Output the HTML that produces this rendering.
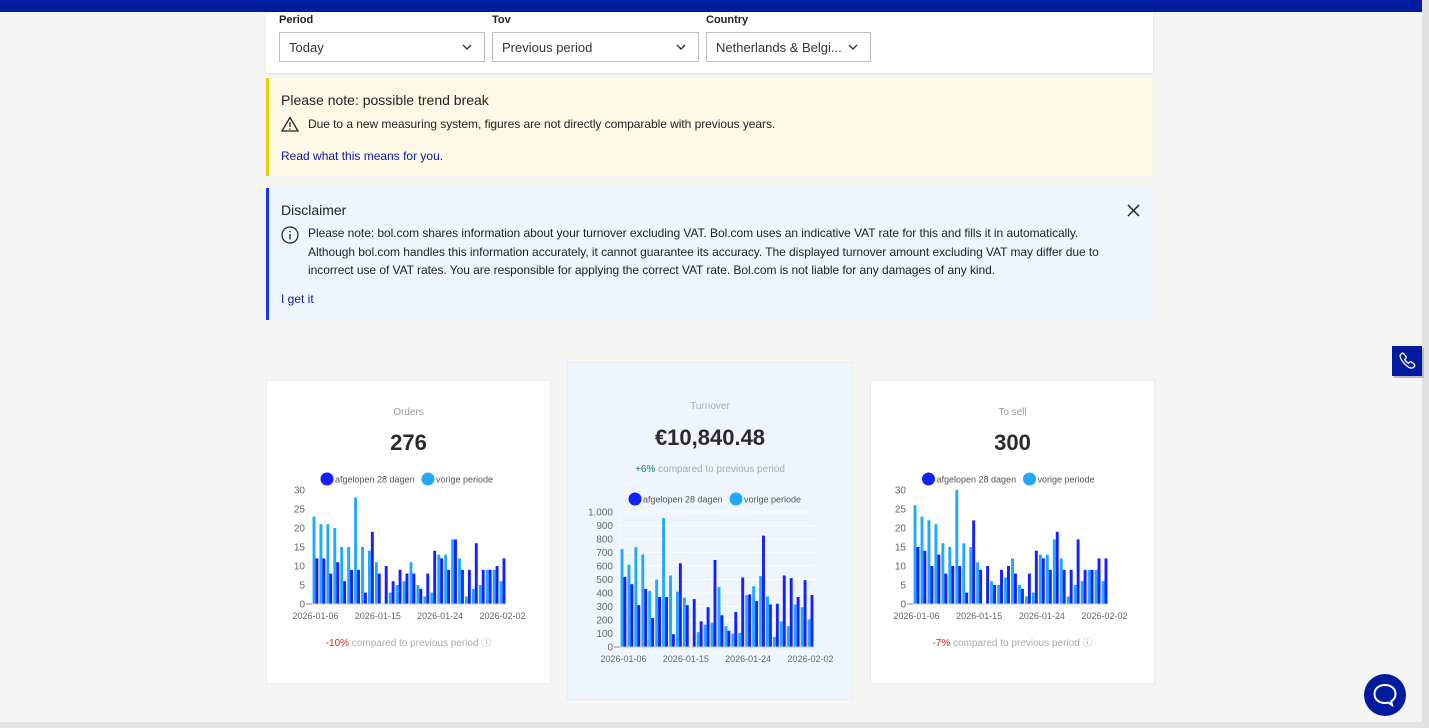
<!DOCTYPE html>
<html><head><meta charset="utf-8"><style>
*{box-sizing:border-box;margin:0;padding:0}
body{width:1429px;height:728px;overflow:hidden;background:#f5f5f4;font-family:"Liberation Sans",Arial,sans-serif;color:#222;position:relative}
.top{position:absolute;left:0;top:0;width:1422px;height:12px;background:#001ba0}
.sb{position:absolute;right:0;top:0;width:7px;height:728px;background:#e2e2e2}
.bot{position:absolute;left:0;top:722px;width:1422px;height:6px;background:#e2e2e2}
.panel{position:absolute;left:266px;top:12px;width:887px;height:61px;background:#fff;box-shadow:0 1px 2px rgba(0,0,0,.1)}
.lbl{position:absolute;top:2px;font-size:11px;font-weight:bold;color:#222}
.sel{position:absolute;top:20px;height:30px;border:1px solid #bdbdbd;background:#fff;font-size:13px;color:#333;padding:7px 0 0 9px}
.sel svg{position:absolute;right:12px;top:11px}
.note{position:absolute;left:266px;width:887px;font-size:12px;color:#222}
.note h3{font-weight:normal;font-size:14px;position:absolute;left:15px;top:14px}
.note .t{position:absolute;left:42px;white-space:nowrap;line-height:18.5px;letter-spacing:-0.05px}
.note a{position:absolute;left:15px;color:#0b1a9c;text-decoration:none}
.card{position:absolute;background:#fff;border:1px solid #ececec}
.card .ti{position:absolute;width:100%;text-align:center;font-size:10px;color:#999}
.card .big{position:absolute;width:100%;text-align:center;font-size:22px;font-weight:bold;color:#2a2a2a}
.card .cmp{position:absolute;width:100%;text-align:center;font-size:10px;color:#aaa}
svg text{font-family:"Liberation Sans",Arial,sans-serif}
</style></head><body>
<div class="top"></div><div class="sb"></div><div class="bot"></div>
<div class="panel">
<div class="lbl" style="left:13px">Period</div>
<div class="lbl" style="left:226px">Tov</div>
<div class="lbl" style="left:440px">Country</div>
<div class="sel" style="left:13px;width:206px">Today<svg width="10" height="6"><path d="M1 1l4 4 4-4" stroke="#333" stroke-width="1.4" fill="none"/></svg></div>
<div class="sel" style="left:226px;width:207px">Previous period<svg width="10" height="6"><path d="M1 1l4 4 4-4" stroke="#333" stroke-width="1.4" fill="none"/></svg></div>
<div class="sel" style="left:440px;width:165px">Netherlands &amp; Belgi...<svg width="10" height="6" style="right:12px"><path d="M1 1l4 4 4-4" stroke="#333" stroke-width="1.4" fill="none"/></svg></div>
</div>
<div class="note" style="top:78px;height:98px;background:#fef8e6;border-left:3px solid #f5c800">
<h3 style="left:12px;top:14px">Please note: possible trend break</h3>
<svg style="position:absolute;left:12px;top:38px" width="18" height="16"><path d="M9 1.5L1 15h16z" fill="none" stroke="#222" stroke-width="1.3"/><path d="M9 6v5M9 12.5v1.3" stroke="#222" stroke-width="1.3"/></svg>
<div class="t" style="top:37px;left:39px">Due to a new measuring system, figures are not directly comparable with previous years.</div>
<a style="top:71px;left:12px">Read what this means for you.</a>
</div>
<div class="note" style="top:188px;height:132px;background:#eef5fd;border-left:3px solid #1431ff">
<h3 style="left:12px;top:14px">Disclaimer</h3>
<svg style="position:absolute;right:13px;top:16px" width="13" height="13"><path d="M1 1l11 11M12 1L1 12" stroke="#222" stroke-width="1.5"/></svg>
<svg style="position:absolute;left:12px;top:38px" width="18" height="18"><circle cx="9" cy="9" r="8" fill="none" stroke="#222" stroke-width="1.2"/><path d="M9 8v5.5M9 5v1.3" stroke="#222" stroke-width="1.3"/></svg>
<div class="t" style="top:36px;left:39px">Please note: bol.com shares information about your turnover excluding VAT. Bol.com uses an indicative VAT rate for this and fills it in automatically.<br>Although bol.com handles this information accurately, it cannot guarantee its accuracy. The displayed turnover amount excluding VAT may differ due to<br>incorrect use of VAT rates. You are responsible for applying the correct VAT rate. Bol.com is not liable for any damages of any kind.</div>
<a style="top:104px;left:12px">I get it</a>
</div>

<div class="card" style="left:266px;top:380px;width:285px;height:304px">
<div class="ti" style="top:26px">Orders</div>
<div class="big" style="top:49px">276</div>
<div class="cmp" style="top:253px"><span style="color:#e02020">-10%</span> compared to previous period ⓘ</div>
</div>
<div class="card" style="left:567px;top:362px;width:286px;height:338px;background:#eef5fd">
<div class="ti" style="top:38px;color:#aab">Turnover</div>
<div class="big" style="top:62px">€10,840.48</div>
<div class="cmp" style="top:101px"><span style="color:#1f7a6a">+6%</span> compared to previous period</div>
</div>
<div class="card" style="left:870px;top:380px;width:285px;height:304px">
<div class="ti" style="top:26px">To sell</div>
<div class="big" style="top:49px">300</div>
<div class="cmp" style="top:253px"><span style="color:#e02020">-7%</span> compared to previous period ⓘ</div>
</div>
<svg id="ch" style="position:absolute;left:0;top:0" width="1429" height="728"></svg>

<div style="position:absolute;left:1392px;top:346px;width:30px;height:30px;background:#001ba0;box-shadow:2px 2px 0 #bbb">
<svg width="30" height="30"><path d="M9 8c1-1 2-1 3 0l2 2.5c.5.7.3 1.4-.3 2l-1 .8c.8 1.8 2.2 3.2 4 4l.8-1c.6-.6 1.3-.8 2-.3L22 18c1 1 1 2 0 3-1.5 1.5-3.5 1.5-6-.2-2.5-1.7-4.3-3.6-6-6C8.3 12.3 7.5 9.5 9 8z" fill="none" stroke="#fff" stroke-width="1.3"/></svg></div>
<div style="position:absolute;left:1364px;top:674px;width:42px;height:42px;border-radius:50%;background:#001ba0">
<svg width="42" height="42"><path d="M21 11c-6.5 0-10.5 4-10.5 9s4 9 10.5 9c1.2 0 2.3-.1 3.3-.4l3.7 2.4-.8-3.6c2.6-1.6 4.3-4.2 4.3-7.4 0-5-4-9-10.5-9z" fill="none" stroke="#fff" stroke-width="2"/></svg></div>

<script>
var NS="http://www.w3.org/2000/svg",svg=document.getElementById("ch");
function el(t,a,txt){var e=document.createElementNS(NS,t);for(var k in a)e.setAttribute(k,a[k]);if(txt!==undefined)e.textContent=String(txt);svg.appendChild(e);return e;}
var dark="#1421ff",light="#22a8ff";
function chart(x0,x1,y0,yTop,max,ticks,data,legY,grid,fmt){
  var cx=(x0+x1)/2;
  el("circle",{cx:cx-82,cy:legY,r:6.5,fill:dark});
  el("text",{x:cx-74,y:legY+3.5,"font-size":"9","fill":"#555"},"afgelopen 28 dagen");
  el("circle",{cx:cx+19,cy:legY,r:6.5,fill:light});
  el("text",{x:cx+27,y:legY+3.5,"font-size":"9",fill:"#555"},"vorige periode");
  ticks.forEach(function(v){var y=y0-(y0-yTop)*v/max;
    if(grid&&v>0)el("line",{x1:x0,x2:x1,y1:y,y2:y,stroke:"#fff","stroke-width":1});
    el("text",{x:x0-7,y:y+3.5,"font-size":"10",fill:"#666","text-anchor":"end"},fmt?fmt(v):v);
  });
  el("line",{x1:x0-6,x2:x0,y1:y0,y2:y0,stroke:"#888"});
  if(grid)el("line",{x1:x0,x2:x0,y1:yTop,y2:y0,stroke:"#fff"});
  var w=(x1-x0)/28,bw=w*0.42;
  data.forEach(function(d,i){var bx=x0+i*w+w*0.08;
    var h1=(y0-yTop)*d[0]/max,h2=(y0-yTop)*d[1]/max;
    el("rect",{x:bx,y:y0-h1,width:bw,height:h1,fill:light});
    el("rect",{x:bx+bw,y:y0-h2,width:bw,height:h2,fill:dark});
  });
  el("line",{x1:x0,x2:x1,y1:y0,y2:y0,stroke:"#ccc"});
  ["2026-01-06","2026-01-15","2026-01-24","2026-02-02"].forEach(function(s,i){
    el("text",{x:x0+(i*9+0.5)*w,y:y0+15,"font-size":"9",fill:"#666","text-anchor":"middle"},s);});
}
var o=[[23,12],[21,12],[21,8],[20,11],[15,6],[15,9],[28,9],[15,3],[14,19],[11,8],[0,10],[3,6],[5,9],[6,8],[11,8],[5,4],[2,8],[3,14],[13,12],[13,9],[17,17],[12,9],[2,9],[4,16],[5,9],[9,9],[9,10],[6,12]];
var s=[[26,15],[23,14],[22,10],[21,13],[16,8],[15,10],[30,10],[16,3],[15,22],[11,9],[0,10],[6,5],[5,9],[7,10],[12,8],[5,4],[2,8],[3,14],[13,12],[13,9],[17,19],[12,9],[2,9],[5,17],[6,9],[9,9],[9,12],[6,12]];
var t=[[725,520],[610,465],[740,310],[685,430],[415,215],[500,370],[955,370],[530,95],[410,620],[365,310],[0,355],[110,190],[165,295],[180,645],[445,235],[155,120],[100,260],[105,515],[385,390],[450,340],[525,825],[375,315],[75,320],[190,530],[155,510],[315,370],[295,495],[205,385]];
chart(312,506,604,490,30,[0,5,10,15,20,25,30],o,479,false);
chart(913,1108,604,490,30,[0,5,10,15,20,25,30],s,479,false);
chart(620,814,647,512,1000,[0,100,200,300,400,500,600,700,800,900,1000],t,499,true,function(v){return v==1000?"1.000":v;});
</script>
</body></html>
